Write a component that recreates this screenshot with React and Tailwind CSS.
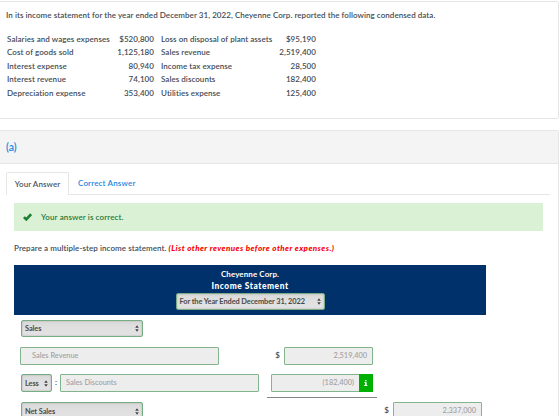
const rows = [
  ['Salaries and wages expenses', '$520,800', 'Loss on disposal of plant assets', '$95,190'],
  ['Cost of goods sold', '1,125,180', 'Sales revenue', '2,519,400'],
  ['Interest expense', '80,940', 'Income tax expense', '28,500'],
  ['Interest revenue', '74,100', 'Sales discounts', '182,400'],
  ['Depreciation expense', '353,400', 'Utilities expense', '125,400'],
];

function Arrows() {
  return (
    <svg className="h-[7px] w-[4px] shrink-0" viewBox="0 0 4 7" fill="#444">
      <path d="M2 0.3 3.8 2.8H.2zM2 6.7 .2 4.2h3.6z" />
    </svg>
  );
}

function Select({ className, children }) {
  return (
    <div
      className={`flex h-[17px] shrink-0 items-center justify-between rounded-[2px] border border-[#76ad84] bg-linear-to-b from-[#dadada] via-[#e0e0e0] to-[#e3e3e3] pl-[3px] text-[7.4px] font-bold tracking-[-0.08px] text-[#4a4a4a] shadow-[inset_0_0_2px_#aaa] ${className}`}
    >
      <span className="pt-px">{children}</span>
      <Arrows />
    </div>
  );
}

function Field({ className, children }) {
  return (
    <div
      className={`flex h-[18px] shrink-0 items-center rounded-[1px] border border-[#82b58e] bg-[#ededed] text-[7.4px] font-medium text-[#a0a0a0] ${className}`}
    >
      {children}
    </div>
  );
}

export default function App() {
  return (
    <div className="h-[416px] w-[560px] overflow-hidden bg-white pt-px font-['Lato',sans-serif] text-[8px] leading-[13.4px] font-semibold whitespace-nowrap text-[#434c55]">
      <section className="h-[118px] w-[559px] rounded-r-[2px] border-y border-r border-[#e6e6e6] pt-[7px] pl-[7px]">
        <p className="-ml-px tracking-[0.06px]">In its income statement for the year ended December 31, 2022, Cheyenne Corp. reported the following condensed data.</p>
        <div className="mt-[10.6px]">
          {rows.map(([a, b, c, d]) => (
            <div key={a} className="flex">
              <span className="w-[105px] tracking-[0.08px]">{a}</span>
              <span className="w-[42px] text-right tracking-[0.06px]">{b}</span>
              <span className="ml-[7px] w-[113px] tracking-[0.05px]">{c}</span>
              <span className="w-[42px] text-right tracking-[0.06px]">{d}</span>
            </div>
          ))}
        </div>
      </section>

      <section className="mt-[11px] h-[300px] w-[559px] rounded-tr-[2px] border-t border-r border-[#e6e6e6]">
        <h2 className="flex h-[33px] items-center border-b border-[#e6e6e6] bg-[#f4f4f4] pt-px pl-[6px] text-[10.5px] text-[#1a87e0]">(a)</h2>
        <div className="mr-[8px] ml-[6px] flex h-[31px] items-end border-b border-[#e6e6e6]">
          <div className="-mb-px flex h-[23px] w-[63px] items-center justify-center rounded-t-[2px] border border-b-0 border-[#e6e6e6] bg-white pt-px tracking-[0.07px] text-[#4d555c]">
            Your Answer
          </div>
          <div className="flex h-[22px] items-center pt-px pl-[9px] tracking-[0.16px] text-[#1a87e0]">Correct Answer</div>
        </div>

        <div className="mt-[8px] ml-[14px] flex h-[28px] w-[529px] items-center bg-[#dbf1d5] pl-[9px] text-[#237a3b]">
          <svg className="mr-[9px] h-[8px] w-[9px]" viewBox="0 0 9 8" fill="none" stroke="#1c7f35" strokeWidth="2.6">
            <path d="M.9 4.1 3.3 6.4 8.1 1.2" />
          </svg>
          <span className="pt-px tracking-[0.12px]">Your answer is correct.</span>
        </div>

        <p className="mt-[11px] ml-[14px] tracking-[0.07px]">
          Prepare a multiple-step income statement.{' '}
          <em className="tracking-[0.45px] font-black text-[#f80000]">(List other revenues before other expenses.)</em>
        </p>

        <div className="mt-[9.6px] ml-[14px] w-[472px]">
          <div className="flex h-[50px] flex-col items-center bg-[#00316b] pt-[4px] text-center leading-[11.5px] font-bold text-white">
            <div className="tracking-[0.1px]">Cheyenne Corp.</div>
            <div className="text-[8.4px] font-black tracking-[0.55px]">Income Statement</div>
            <Select className="mt-px w-[149px] pr-[3px]">For the Year Ended December 31, 2022</Select>
          </div>

          <div className="pt-[5px] pl-[6px]">
            <Select className="ml-px w-[122px] pr-[3px]">Sales</Select>
            <div className="mt-[10px] flex items-center">
              <Field className="w-[199px] pl-[11px]">Sales Revenue</Field>
              <span className="w-[65px] pr-[4px] text-right">$</span>
              <Field className="w-[89px] justify-end pr-[5px]">2,519,400</Field>
            </div>
            <div className="mt-[9px] flex items-center">
              <Select className="ml-px h-[18px] w-[31px] pr-[3px]">Less</Select>
              <span className="w-[8px] text-center">:</span>
              <Field className="w-[199px] pl-[5px]">Sales Discounts</Field>
              <Field className="ml-[12px] w-[102px] justify-end">
                <span className="pr-[5px]">(182,400)</span>
                <span className="-my-px -mr-px flex h-[18px] w-[14px] items-center justify-center bg-[#00b000]">
                  <svg className="h-[6px] w-[4px]" viewBox="0 0 4 6" fill="white">
                    <path d="M1 0h1.5v1.3H1zM.4 2h2.2v3h.8v1H.2V5h.8V3H.4z" />
                  </svg>
                </span>
              </Field>
            </div>
            <div className="mt-[5px] ml-[247px] h-px w-[110px] bg-[#858585]" />
            <div className="mt-[4px] flex items-center">
              <Select className="ml-px h-[18px] w-[122px] pr-[3px]">Net Sales</Select>
              <span className="w-[250px] pr-[4px] text-right">$</span>
              <Field className="w-[89px] justify-end pr-[5px]">2,337,000</Field>
            </div>
          </div>
        </div>
      </section>
    </div>
  );
}
